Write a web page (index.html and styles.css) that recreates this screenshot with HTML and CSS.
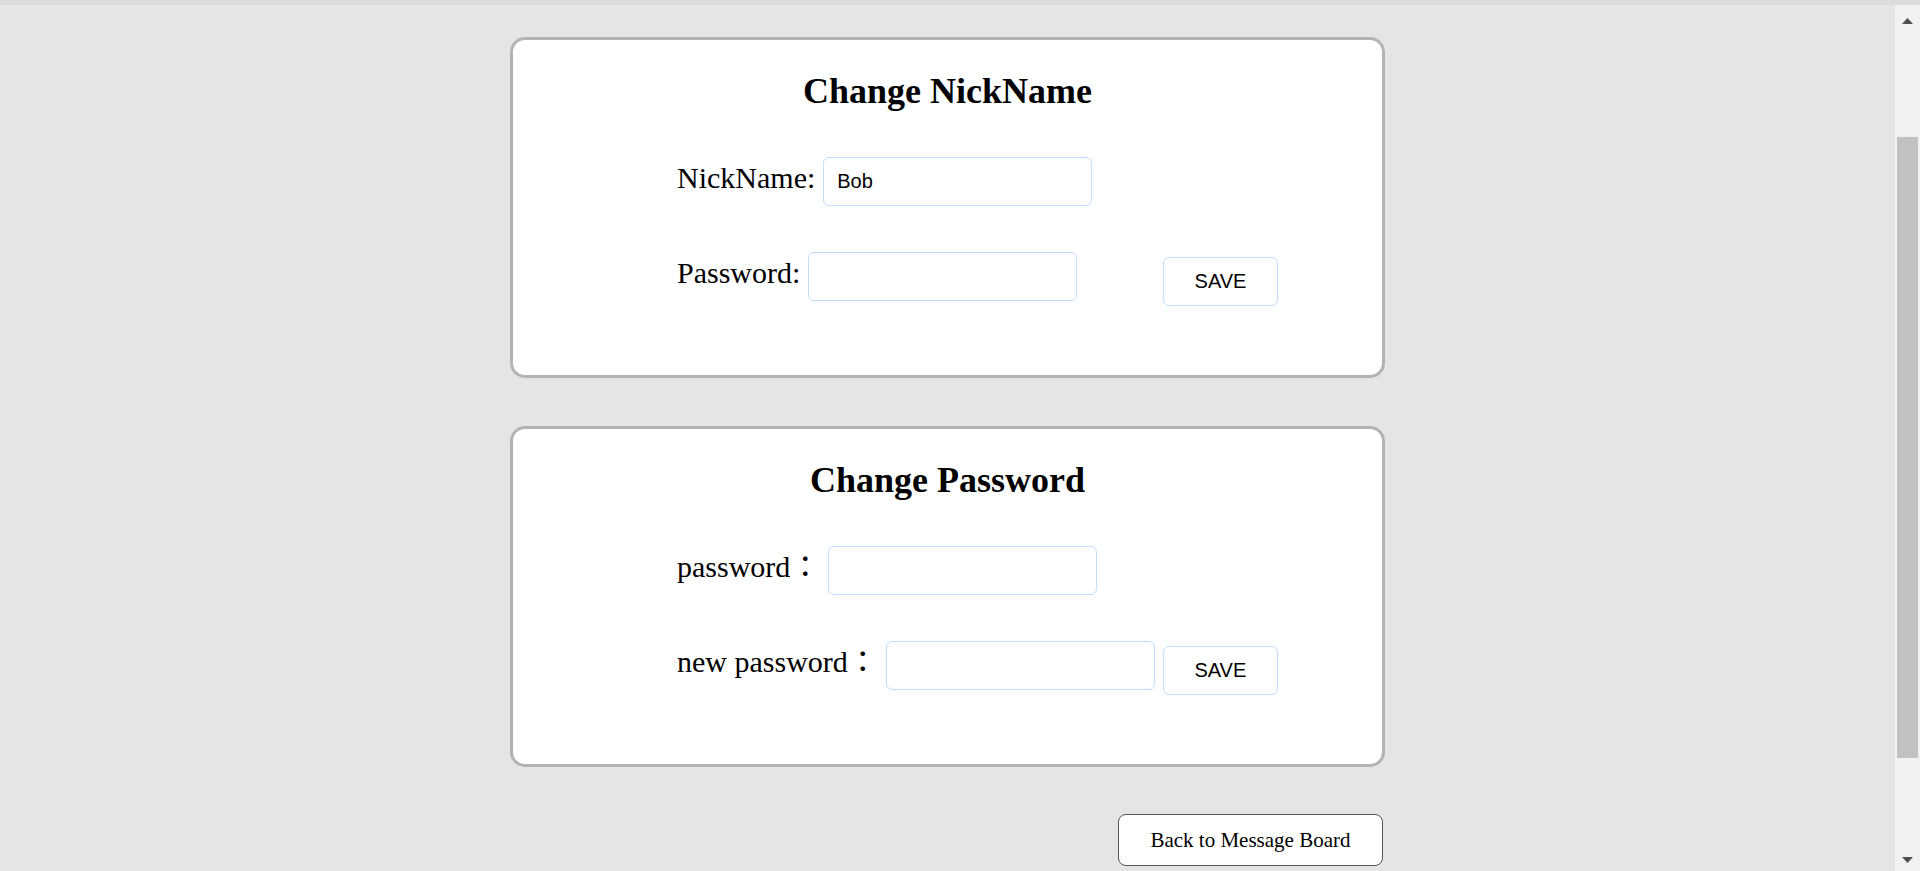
FILE: index.html
```html
<!DOCTYPE html>
<html lang="en">
<head>
<meta charset="utf-8">
<title>Settings</title>
<link rel="stylesheet" href="styles.css">
</head>
<body>
<div class="screen">
  <div class="topbar"></div>
  <div class="viewport">
    <main class="page">
      <section class="card">
        <h2 class="card-title">Change NickName</h2>
        <div class="form">
          <div class="row">
            <span class="label">NickName:</span>
            <input class="field" type="text" value="Bob">
          </div>
          <div class="row row-last">
            <span class="label">Password:</span>
            <input class="field" type="password">
            <button class="save save-right" type="button">SAVE</button>
          </div>
        </div>
      </section>

      <section class="card card-second">
        <h2 class="card-title">Change Password</h2>
        <div class="form">
          <div class="row">
            <span class="label">password：</span>
            <input class="field" type="password">
          </div>
          <div class="row row-last">
            <span class="label">new password：</span>
            <input class="field" type="password">
            <button class="save" type="button">SAVE</button>
          </div>
        </div>
      </section>

      <div class="actions">
        <button class="back" type="button">Back to Message Board</button>
      </div>
    </main>
    <div class="scrollbar">
      <div class="sb-up">
        <svg width="11" height="6" viewBox="0 0 11 6"><polygon points="5.5,0 11,6 0,6" fill="#505050"/></svg>
      </div>
      <div class="sb-track">
        <div class="sb-thumb"></div>
      </div>
      <div class="sb-down">
        <svg width="11" height="6" viewBox="0 0 11 6"><polygon points="0,0 11,0 5.5,6" fill="#505050"/></svg>
      </div>
    </div>
  </div>
</div>
</body>
</html>
```
FILE: styles.css
```css
* { box-sizing: border-box; }

html, body {
  margin: 0;
  padding: 0;
  height: 871px;
  overflow: hidden;
}

body {
  background: #e5e5e5;
  font-family: "Liberation Serif", "Noto Sans CJK JP", serif;
  color: #000;
}

.screen {
  display: flex;
  flex-direction: column;
  height: 871px;
}

.topbar {
  height: 5px;
  flex: 0 0 5px;
  background: #dcdce0;
}

.viewport {
  flex: 1;
  display: flex;
  min-height: 0;
}

.page {
  flex: 1;
  min-width: 0;
  padding-top: 32px;
  background: #e5e5e5;
}

.card {
  width: 875px;
  height: 341px;
  margin: 0 auto;
  background: #fff;
  border: 3px solid #b3b3b3;
  border-radius: 15px;
  padding: 30px 104px 0 164px;
}

.card-second {
  margin-top: 48px;
}

.card-title {
  margin: 0 0 45px -164px;
  margin-right: -104px;
  font-size: 36px;
  line-height: 42px;
  font-weight: bold;
  text-align: center;
}

.form {
  display: flex;
  flex-direction: column;
  gap: 46px;
}

.row {
  display: flex;
  align-items: flex-start;
  gap: 8px;
}

.label {
  font-size: 30px;
  line-height: 42px;
  white-space: nowrap;
}

.field {
  width: 269px;
  height: 49px;
  margin: 0;
  padding: 0 13px;
  border: 1px solid #bfdfff;
  border-radius: 6px;
  background: #fff;
  font-family: "Liberation Sans", Arial, sans-serif;
  font-size: 20px;
  color: #000;
  outline: none;
}

.save {
  width: 115px;
  height: 49px;
  margin: 5px 0 0 0;
  padding: 0;
  border: 1px solid #bfdfff;
  border-radius: 6px;
  background: #fff;
  font-family: "Liberation Sans", Arial, sans-serif;
  font-size: 20px;
  color: #000;
}

.save-right {
  margin-left: auto;
}

.actions {
  width: 875px;
  margin: 47px auto 0;
  display: flex;
  justify-content: flex-end;
}

.back {
  width: 265px;
  height: 52px;
  margin: 0 2px 0 0;
  padding: 0;
  border: 1.5px solid #555;
  border-radius: 8px;
  background: #fff;
  font-family: "Liberation Serif", serif;
  font-size: 21px;
  color: #000;
}

.scrollbar {
  flex: 0 0 25px;
  width: 25px;
  background: #f1f1f1;
  display: flex;
  flex-direction: column;
}

.sb-up {
  height: 31px;
  display: flex;
  align-items: center;
  justify-content: center;
}

.sb-track {
  flex: 1;
  padding: 101px 2px 0;
}

.sb-thumb {
  height: 621px;
  background: #c1c1c1;
}

.sb-down {
  height: 22px;
  display: flex;
  align-items: center;
  justify-content: center;
}

.sb-up svg, .sb-down svg { display: block; }
```
